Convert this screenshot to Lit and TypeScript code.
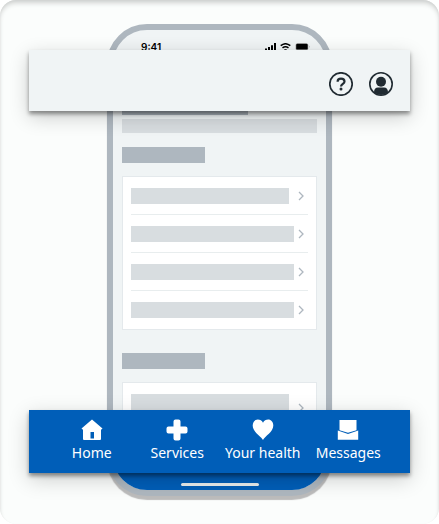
import { LitElement, html, css, svg } from "lit";
import { customElement } from "lit/decorators.js";

const home = svg`<path d="M11 .5L21.500 9.500L20.500 10.500H20V20Q20 21 19 21H3Q2 21 2 20V10.500H1.500L.5 9.500Z"/><path d="M9.500 13h3.500v6.500h-3.500z" fill="#005eb8"/>`;
const plus = svg`<path d="M9.500 .5h3a2 2 0 0 1 2 2v5h5a2 2 0 0 1 2 2v3a2 2 0 0 1-2 2h-5v5a2 2 0 0 1-2 2h-3a2 2 0 0 1-2-2v-5h-5a2 2 0 0 1-2-2v-3a2 2 0 0 1 2-2h5v-5a2 2 0 0 1 2-2z"/>`;
const heart = svg`<path d="M11 21C9 17 .7 13 .7 6.500C.7 3 3 .6 5.800 .6C8 .6 10 1.800 11 3.800C12 1.800 14 .6 16.200 .6C19 .6 21.300 3 21.300 6.500C21.300 13 13 17 11 21z"/>`;
const mail = svg`<path d="M2.500 1h17v10.300L11 13.800 2.500 11.300z"/><path d="M.8 11.500L11 15l10.200-3.500v9.300H.8z"/>`;

const items = [
  { label: "Home", icon: home },
  { label: "Services", icon: plus },
  { label: "Your health", icon: heart },
  { label: "Messages", icon: mail },
];

@customElement("app-header")
export class AppHeader extends LitElement {
  static styles = css`
    .bar {
      display: flex;
      align-items: center;
      justify-content: flex-end;
      gap: 16px;
      height: 61px;
      padding: 6px 17px 0 0;
      box-sizing: border-box;
      background: #f0f4f5;
      box-shadow: 0 3px 4px rgba(0, 0, 0, 0.4), 0 6px 20px rgba(0, 0, 0, 0.2);
    }
    button {
      display: block;
      width: 24px;
      height: 24px;
      padding: 0;
      border: 0;
      background: none;
    }
    svg { display: block; }
  `;
  render() {
    return html`<header class="bar">
      <button aria-label="Help">
        <svg width="24" height="24" viewBox="0 0 24 24" fill="none" stroke="#212b32">
          <circle cx="12" cy="12" r="11.200" stroke-width="1.700" />
          <path d="M8.600 9.700C8.600 7.600 10 6.600 12 6.600S15.500 7.800 15.500 9.500C15.500 11.800 12 11.900 12 14.500" stroke-width="2.200" />
          <circle cx="12" cy="17" r="1.500" fill="#212b32" stroke="none" />
        </svg>
      </button>
      <button aria-label="Account">
        <svg width="24" height="24" viewBox="0 0 24 24">
          <circle cx="12" cy="12" r="11.200" fill="none" stroke="#212b32" stroke-width="1.600" />
          <circle cx="12" cy="9.800" r="5" fill="#212b32" />
          <path d="M5 20.500C5 17 6.500 15.500 9 15.500H15C17.500 15.500 19 17 19 20.500A11.200 11.200 0 0 1 5 20.500z" fill="#212b32" />
        </svg>
      </button>
    </header>`;
  }
}

@customElement("app-nav")
export class AppNav extends LitElement {
  static styles = css`
    .bar {
      display: grid;
      grid-template-columns: repeat(4, 1fr);
      height: 63px;
      padding: 9px 19px 0 20px;
      box-sizing: border-box;
      background: #005eb8;
      box-shadow: 0 3px 4px rgba(0, 0, 0, 0.4), 0 6px 20px rgba(0, 0, 0, 0.2);
    }
    a {
      display: flex;
      flex-direction: column;
      align-items: center;
      gap: 2px;
      color: #fff;
      font: 14px/20px "Noto Sans", "Open Sans", sans-serif;
      text-decoration: none;
      white-space: nowrap;
    }
    svg { display: block; fill: #fff; }
  `;
  render() {
    return html`<nav class="bar">
      ${items.map(
        (i) => html`<a href="#">
          <svg width="22" height="22" viewBox="0 0 22 22" aria-hidden="true">${i.icon}</svg>
          <span>${i.label}</span>
        </a>`
      )}
    </nav>`;
  }
}

@customElement("app-phone")
export class AppPhone extends LitElement {
  static styles = css`
    .phone {
      border: 6px solid #aeb7bf;
      border-radius: 40px;
      background: #f0f4f5;
      overflow: hidden;
      box-shadow: 0 4px 1px #bcbcbc;
    }
    .status {
      display: flex;
      justify-content: space-between;
      height: 69px;
      padding: 11px 16px 0 28px;
      box-sizing: border-box;
      color: #000;
      font: 600 10px/12px Inter, sans-serif;
    }
    .signals {
      display: flex;
      gap: 4px;
      padding-top: 2px;
    }
    .content { padding: 0 9px; }
    .block { height: 16px; background: #aeb7bf; }
    .title { width: 126px; }
    .intro { height: 14px; margin: 4px 0 14px; background: #d8dde0; }
    .heading { width: 83px; margin-bottom: 13px; }
    .card {
      display: grid;
      grid-auto-rows: 1fr;
      padding: 0 8px;
      box-sizing: border-box;
      border: 1px solid #e4e9ec;
      background: #fff;
    }
    .full { height: 154px; margin-bottom: 23px; }
    .part { height: 50px; border-bottom: 0; }
    .row {
      display: flex;
      align-items: center;
      justify-content: space-between;
      padding-right: 4px;
      border-bottom: 1px solid #e8edee;
    }
    .row:last-child { border-bottom: 0; }
    .line { width: 163px; height: 16px; background: #d8dde0; }
    .row:first-child .line { width: 158px; }
    .part .line { height: 28px; }
    .foot {
      display: flex;
      align-items: flex-end;
      justify-content: center;
      height: 58px;
      padding-bottom: 4px;
      box-sizing: border-box;
      background: #005eb8;
    }
    .handle { width: 78px; height: 3px; border-radius: 2px; background: #e8edee; }
    svg { display: block; flex: none; }
  `;

  private row() {
    return html`<div class="row">
      <div class="line"></div>
      <svg width="6" height="10" viewBox="0 0 6 10" fill="none" stroke="#aeb7bf" stroke-width="1.300"><path d="M1 1l4 4-4 4" /></svg>
    </div>`;
  }

  render() {
    return html`<div class="phone">
      <div class="status">
        <span>9:41</span>
        <div class="signals">
          <svg width="11" height="8" viewBox="0 0 11 8"><path d="M0 5.500h2v2.500H0zM3 4h2v4H3zM6 2.200h2V8H6zM9 0h2v8H9z" /></svg>
          <svg width="11" height="8" viewBox="0 0 11 8" fill="none" stroke="#000" stroke-width="1.500"><path d="M.7 2.700Q5.500-1.200 10.300 2.700M2.500 4.900Q5.500 2.500 8.500 4.900" /><path d="M4 6.300h3L5.500 7.900z" fill="#000" stroke="none" /></svg>
          <svg width="15" height="8" viewBox="0 0 15 8"><rect x=".4" y=".2" width="13" height="7" rx="2" fill="#bbb" /><rect x="1.200" y=".8" width="11.500" height="5.800" rx="1.200" /><path d="M14 2.500v2.500q1-1.200 0-2.500" fill="#888" /></svg>
        </div>
      </div>
      <div class="content">
        <div class="block title"></div>
        <div class="intro"></div>
        <div class="block heading"></div>
        <div class="card full">${[0, 1, 2, 3].map(() => this.row())}</div>
        <div class="block heading"></div>
        <div class="card part">${this.row()}</div>
      </div>
      <div class="foot"><div class="handle"></div></div>
    </div>`;
  }
}

@customElement("app-root")
export class AppRoot extends LitElement {
  static styles = css`
    :host { display: block; background: #fff; }
    .stage {
      display: grid;
      padding: 24px 29px 28px;
      border-radius: 16px;
      background: #fbfdfc;
      box-shadow: inset 0 4px 5px -1px #cfd1d0, inset 0 1px 2px #e4e6e5;
    }
    app-phone, app-header, app-nav { display: block; grid-area: 1 / 1; }
    app-phone { width: 100%; max-width: 225px; justify-self: center; }
    app-header { align-self: start; margin-top: 26px; z-index: 1; }
    app-nav { align-self: end; margin-bottom: 23px; z-index: 1; }
  `;
  render() {
    return html`<main class="stage">
      <app-phone></app-phone>
      <app-header></app-header>
      <app-nav></app-nav>
    </main>`;
  }
}
